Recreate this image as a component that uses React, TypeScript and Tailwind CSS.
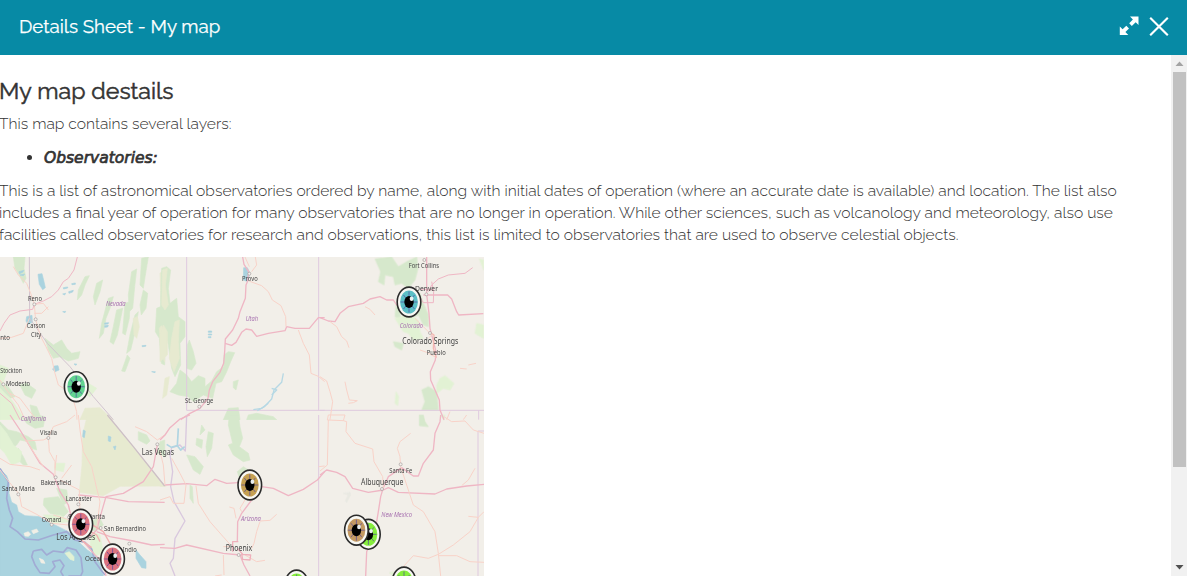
type Line = { d: string; c?: string; w?: number };
type Area = { d: string; c: string };
type Label = { x: number; y: number; w: number; s: number; t: string; region?: boolean };
type Tile = { x: number; y: number; areas: Area[]; lines: Line[]; labels: Label[]; towns?: [number, number][] };

const PINK = "#efb6c4";
const PEACH = "#f8d2c8";
const BORDER = "#dfc9df";
const GREEN = "#d6e8cc";
const LIME = "#e2f2d4";
const OLIVE = "#e7ead0";
const WATER = "#aad3df";

const tiles: Tile[] = [
  {
    x: 0,
    y: 255,
    areas: [
      { c: GREEN, d: "M40 6L75 6L72 40L78 70L70 85L55 55L45 40Z M255 65L268 62L255 90L245 120L232 135L235 105Z M290 85L308 75L300 110L285 150L280 125Z M325 130L340 125L330 160L318 190L310 235L298 250L305 205Z M350 165L368 160L360 200L352 240L340 268L330 260L340 215Z M375 145L390 140L388 190L376 240L368 235Z M395 50L410 42L404 95L398 160L388 170L385 120Z M425 10L445 6L436 60L430 100L420 90Z M430 105L443 115L438 160L424 180L420 150Z M405 180L415 170L405 230L392 285L380 295L390 240Z M470 160L494 150L494 330L484 325L478 250L466 230Z M382 300L390 310L375 350L365 348Z M135 250L160 270L185 255L200 280L215 295L240 290L235 310L205 318L180 305L160 310L145 285Z M60 390L80 385L108 405L95 430L75 420Z M0 375L25 395L45 425L30 430L0 405Z M90 450L110 455L125 494L100 494Z" },
      { c: LIME, d: "M0 400L35 435L75 494L0 494Z M240 370L290 400L270 425L235 405Z M0 330L25 340L10 380L0 375Z" },
      { c: OLIVE, d: "M400 190L412 185L418 215L410 250L402 240Z M480 55L494 40L494 130L483 140Z M478 220L494 200L494 320L484 300Z M255 460L300 458L338 494L240 494Z" },
      { c: WATER, d: "M114 58L126 56L132 80L136 98L128 104L118 88Z M80 185L96 181L97 202L84 208L78 198Z M163 333L174 332L177 345L165 350L158 343Z M190 98L203 96L203 99L191 102Z M206 110L220 106L218 111L207 115Z M215 86L226 84L226 88L216 89Z M188 117L197 115L194 120Z M57 50L72 46L68 52L58 56Z M60 60L74 57L70 62Z M314 204L326 203L324 207L314 208Z M314 212L325 211L323 216L314 217Z M426 272L438 271L437 274L427 275Z M188 170L197 169L195 173Z M222 327L230 327L228 331Z M455 350L466 350L465 353Z" },
    ],
    lines: [
      { d: "M88 6L89 190L142 265L210 335L280 425L340 494", c: "#d2c4cf" },
      { d: "M232 6L222 45L205 70L190 80L175 105L155 125L130 138L103 148L98 163L60 168L30 180L12 205L0 228", c: PINK },
      { d: "M40 35L55 60L80 85L92 115L103 148L106 185L112 215L125 250L138 275L155 310L165 355L175 390L198 405L220 435L230 470L231 494", c: PEACH },
      { d: "M103 148L130 145L145 165 M103 175L125 175L145 155 M0 250L35 247L70 235L88 190 M0 375L20 405L55 450L75 494 M30 415L60 430L90 470L110 494", c: PEACH },
      { d: "M0 415L35 445L60 494", c: PINK },
    ],
    towns: [[103, 148], [107, 193], [10, 388]],
    labels: [
      { x: 84, y: 137, w: 42, s: 20, t: "Reno" },
      { x: 80, y: 218, w: 56, s: 22, t: "Carson" },
      { x: 93, y: 245, w: 31, s: 22, t: "City" },
      { x: 1, y: 254, w: 29, s: 24, t: "nto" },
      { x: 1, y: 354, w: 65, s: 20, t: "Stockton" },
      { x: 18, y: 394, w: 72, s: 20, t: "Modesto" },
      { x: 318, y: 154, w: 59, s: 21, t: "Nevada", region: true },
    ],
  },
  {
    x: 160,
    y: 255,
    areas: [
      { c: GREEN, d: "M5 40L20 35L32 45L25 100L30 145L50 130L55 185L75 200L75 245L60 265L62 330L45 365L35 340L25 270L10 220L0 200Z M88 255L100 290L108 325L95 345L80 340L82 270Z M60 345L80 360L95 380L115 362L135 370L135 395L155 378L170 350L190 335L192 300L205 290L224 293L212 320L200 350L185 380L168 385L158 430L130 420L100 440L85 425L55 420L30 410L50 385Z M220 380L235 375L228 405L220 398Z M265 480L290 475L340 485L350 494L260 494Z M205 460L235 458L240 494L190 494Z" },
      { c: OLIVE, d: "M8 45L22 40L16 90L25 150L15 165L5 150Z M45 200L58 195L55 260L58 310L42 350L28 310L35 250Z M10 210L22 230L22 300L0 320L0 240Z M15 370L28 365L20 420L8 430Z" },
      { c: WATER, d: "M251 38L262 38L270 55L263 80L250 75Z M145 228L155 228L155 232L145 232Z M145 237L155 237L155 240L145 240Z M145 245L153 245L153 248L145 248Z" },
    ],
    lines: [
      { d: "M80 6L80 466L494 466 M476 6L476 466", c: BORDER },
      { d: "M248 6L252 28L266 50L263 78L258 90L256 130L240 170L235 190L218 225L196 252L194 290L191 325L180 352L158 380L148 405L144 430L120 460L90 475L62 494", c: PINK, w: 4 },
      { d: "M195 265L215 271L228 262L245 232L258 222L275 225L290 244L325 235L375 227L380 215L405 220L448 220L475 188L494 188", c: PINK, w: 4 },
      { d: "M266 78L305 92L325 110L337 135L363 152L377 185L378 215 M415 225L430 265L448 300L453 355L475 364L494 380 M275 50L290 30L286 6 M255 6L268 35", c: PEACH },
      { d: "M370 355L365 382L342 405L335 432L313 455L292 467", c: "#b6d8e4", w: 4 },
      { d: "M335 400L350 405L335 420 M280 464L305 460L325 445", c: "#b6d8e4", w: 4 },
    ],
    towns: [[268, 56], [118, 455]],
    labels: [
      { x: 246, y: 79, w: 47, s: 20, t: "Provo" },
      { x: 257, y: 198, w: 37, s: 20, t: "Utah", region: true },
      { x: 75, y: 444, w: 85, s: 21, t: "St. George" },
    ],
  },
  {
    x: 320,
    y: 255,
    areas: [
      { c: GREEN, d: "M165 12L215 6L235 35L260 20L290 6L294 40L285 75L265 100L245 85L225 90L220 65L195 60L192 90L175 80L182 50Z M283 105L300 115L310 145L325 180L325 215L310 210L295 180L285 185L275 165L293 160Z M228 150L242 170L240 190L225 185Z M305 405L325 395L350 410L355 465L305 465L315 440Z M220 260L250 265L245 285L225 275Z" },
      { c: LIME, d: "M225 190L270 178L295 195L300 230L310 250L280 255L265 235L250 230Z M360 370L375 362L402 385L390 405L370 400L350 415L350 390Z M228 410L236 425L233 452L225 445Z M470 205L491 210L491 250L465 235Z M478 12L491 15L491 45Z" },
    ],
    lines: [
      { d: "M0 466L494 466 M476 466L476 494", c: BORDER },
      { d: "M0 188L25 198L45 200L60 175L85 155L130 145L150 132L180 125L200 135L220 135L230 150L245 148 M310 120L383 120L395 132L410 170L416 180L490 176 M320 6L320 118L327 175L330 220L348 290L346 315L331 350L332 375L358 435L360 465L372 494", c: PINK, w: 4 },
      { d: "M458 38L435 55L385 60L355 72L335 90L325 110 M335 80L341 110L340 143L310 143L302 130 M300 102L340 105", c: PINK },
      { d: "M30 200L50 215L65 245L80 258L87 278 M135 155L150 163L165 180 M0 365L20 378L30 410L38 440L30 494 M75 380L80 405L88 435L112 437L100 443L85 445 M285 190L310 215L335 240L325 250 M420 340L440 342 M445 330L468 325 M300 285L320 292L350 308 M390 470L380 494 M430 494L440 480", c: PEACH },
      { d: "M330 232L342 240L340 280L349 308", c: "#f4b9b2", w: 4 },
    ],
    towns: [[313, 15], [319, 118], [330, 234]],
    labels: [
      { x: 266, y: 38, w: 91, s: 20, t: "Fort Collins" },
      { x: 285, y: 107, w: 69, s: 24, t: "Denver" },
      { x: 239, y: 218, w: 70, s: 20, t: "Colorado", region: true },
      { x: 247, y: 266, w: 168, s: 26, t: "Colorado Springs" },
      { x: 320, y: 299, w: 57, s: 20, t: "Pueblo" },
    ],
  },
  {
    x: 0,
    y: 415,
    areas: [
      { c: GREEN, d: "M0 20L25 45L50 50L85 65L105 80L110 105L95 100L85 80L60 75L50 90L30 105L15 85L0 80Z M70 10L105 0L135 5L130 35L105 40L80 25Z M55 100L70 125L82 150L70 150L50 130Z M170 220L200 225L205 260L190 270L180 245Z M132 250L175 245L205 290L190 305L150 295L130 270Z M260 320L300 310L310 330L285 350L265 335Z M415 50L440 60L450 78L440 88L415 75Z M480 80L494 75L494 125L475 115Z" },
      { c: LIME, d: "M0 30L20 55L40 90L65 110L60 140L35 150L15 115L0 100Z M165 145L195 145L190 170L165 165Z M130 300L180 300L210 320L160 325Z M275 350L300 360L310 410L285 425L270 400Z" },
      { c: OLIVE, d: "M262 0L322 0L400 95L494 213L360 214L310 242L238 232L246 150L248 60Z" },
      { c: WATER, d: "M0 165L8 170L20 182L28 205L27 235L35 262L50 270L55 290L75 302L120 305L145 320L165 330L205 350L220 360L240 385L262 405L290 425L302 450L310 483L0 483Z M408 405L420 420L438 440L438 460L425 458L408 430Z M340 95L348 93L345 105Z M250 45L256 48L253 68L248 65Z M325 63L333 66L331 80L325 78Z" },
      { c: "#f1efe6", d: "M72 355L85 350L92 358L85 364L75 363Z M95 347L110 342L115 350L100 356Z M118 430L130 435L135 445L124 444Z" },
      { c: LIME, d: "M195 415L208 410L222 425L222 437L210 433Z" },
    ],
    lines: [
      { d: "M322 0L400 95L494 213", c: "#cdbfc6", w: 4 },
      { d: "M0 160L25 200L20 250L28 285L38 310L30 335L52 350L75 372L115 375L160 360L200 350L225 375L255 382L275 402L285 440L303 465L315 480", c: "#a1abd4", w: 5 },
      { d: "M100 408L125 403L140 420L160 408L190 412L202 398L228 405L243 428L248 470L242 483L205 483 M100 408L95 425L105 450L120 473L148 475L165 455L158 440L180 435L192 452L182 470L190 483", c: "#a1abd4", w: 5 },
      { d: "M30 0L60 45L90 95L120 145L160 178L180 230L205 270L215 310L245 345L270 365L290 345L305 290L318 245L370 235L430 200L460 155L472 90", c: PINK, w: 4 },
      { d: "M235 240L320 248L385 260L494 262 M290 350L330 365L400 378L455 390L494 388 M250 380L285 420L310 445L318 483", c: PINK, w: 4 },
      { d: "M75 78L130 75L145 68L148 110L165 140L165 185 M60 60L80 78L100 110L130 155 M0 130L30 148L90 155L120 165 M0 165L25 198L58 238L65 275L110 298L155 325L205 330 M180 195L238 225L240 300 M185 190L215 150 M235 0L240 45L250 110L275 155L290 220L300 260L290 340 M405 35L440 50L472 75L494 60 M160 300L200 312L230 330 M225 0L200 20L160 35L145 68 M170 120L165 160", c: PEACH },
      { d: "M220 350L250 380L275 398 M265 345L290 360L300 380 M270 325L310 350L330 385", c: "#f1b0b0", w: 4 },
    ],
    towns: [[145, 69], [167, 187], [55, 238], [235, 268], [155, 329], [472, 88], [302, 339], [388, 386], [207, 307]],
    labels: [
      { x: 62, y: 17, w: 76, s: 20, t: "California", region: true },
      { x: 120, y: 59, w: 51, s: 20, t: "Visalia" },
      { x: 122, y: 211, w: 91, s: 21, t: "Bakersfield" },
      { x: 6, y: 228, w: 98, s: 21, t: "Santa Maria" },
      { x: 197, y: 259, w: 79, s: 21, t: "Lancaster" },
      { x: 125, y: 320, w: 59, s: 21, t: "Oxnard" },
      { x: 205, y: 312, w: 110, s: 20, t: "Santa Clarita" },
      { x: 169, y: 376, w: 117, s: 25, t: "Los Angeles" },
      { x: 312, y: 347, w: 126, s: 21, t: "San Bernardino" },
      { x: 368, y: 411, w: 42, s: 21, t: "Indio" },
      { x: 255, y: 439, w: 93, s: 21, t: "Oceanside" },
      { x: 425, y: 119, w: 97, s: 25, t: "Las Vegas" },
    ],
  },
  {
    x: 160,
    y: 415,
    areas: [
      { c: GREEN, d: "M208 0L235 0L240 35L248 70L238 95L265 115L270 135L250 140L220 120L205 90L218 85L205 30Z M125 30L135 45L120 60Z M145 50L160 55L155 100L142 125L138 95Z M110 70L128 75L125 100L108 90Z M80 120L105 125L130 155L120 178L100 165Z M232 170L250 155L265 165L240 195Z M90 210L97 215L100 265L90 250Z" },
      { c: OLIVE, d: "M0 195L18 214L0 214Z" },
    ],
    lines: [
      { d: "M476 0L476 483", c: BORDER },
      { d: "M80 0L76 108L60 90L35 98L30 120L38 170L32 215L42 260L75 318L45 370L40 430L30 445L45 483", c: "#d9c8de", w: 4 },
      { d: "M0 75L15 60L30 38L60 12L90 0 M15 210L80 206L140 212L165 193L200 205L235 203 M305 215L340 220L385 242L430 223L472 195L494 170 M275 255L245 295L233 320L232 380 M0 398L45 400L80 390L190 415L240 420L252 450L270 483", c: PINK, w: 4 },
      { d: "M0 110L10 150L15 210 M35 130L60 175L78 210L72 265L40 265L30 245 M0 255L30 245 M108 212L115 265L150 320L185 360L210 388 M300 320L290 350L282 385L275 400 M300 318L330 316L350 298 M208 276L222 280L228 310 M255 255L240 280L245 290 M190 420L192 480 M190 395L210 395 M255 420L290 440L315 436 M165 483L185 480 M476 155L494 153", c: PEACH },
      { d: "M55 40L52 92L62 105L74 95 M20 88L34 97L52 92", c: "#b0d5e2", w: 5 },
      { d: "M218 410L218 380L235 380 M245 418L272 420L270 435L248 433Z M232 400L250 420", c: "#efb0bb", w: 4 },
    ],
    towns: [[236, 420]],
    labels: [
      { x: 243, y: 319, w: 60, s: 20, t: "Arizona", region: true },
      { x: 197, y: 408, w: 80, s: 26, t: "Phoenix" },
    ],
  },
  {
    x: 320,
    y: 415,
    areas: [
      { c: GREEN, d: "M298 0L310 0L315 20L325 35L298 32Z" },
      { c: LIME, d: "M360 0L375 0L372 15Z M208 473L220 470L218 483Z" },
      { c: "#e9e9e2", d: "M70 235L90 232L92 240L80 262L76 258L85 240Z" },
    ],
    lines: [
      { d: "M492 48L474 48L474 483", c: BORDER },
      { d: "M0 180L20 165L50 172L75 185L98 220L145 232L190 225L205 218L235 232L345 237L380 222L440 213L492 208 M362 0L360 20L345 55L340 105L310 145L295 183L280 183L245 158L205 185L190 218L182 245L175 290L165 350L140 410L137 483", c: PINK, w: 4 },
      { d: "M22 15L70 17L80 20L78 50L105 85L158 102L162 140L188 185L190 220 M25 15L22 150L0 168 M22 15L25 0L75 0L70 17 M272 55L240 80L232 100L240 125L242 155L260 210L280 270L310 290L345 350L355 415L362 483 M372 5L395 20L435 18L460 45L492 55 M465 160L445 195L425 212 M492 290L475 307L445 304 M475 307L450 350L400 390L355 418L325 430L280 422L250 455 M355 422L410 422L450 440L492 442", c: PEACH },
    ],
    towns: [[242, 148], [186, 222]],
    labels: [
      { x: 208, y: 174, w: 69, s: 22, t: "Santa Fe" },
      { x: 123, y: 211, w: 127, s: 26, t: "Albuquerque" },
      { x: 184, y: 305, w: 92, s: 20, t: "New Mexico", region: true },
    ],
  },
];

const eyes: [number, number, string][] = [
  [409, 302, "#5cbfc6"],
  [76.2, 386.7, "#62d391"],
  [249.8, 485, "#c5a052"],
  [80.8, 524.3, "#dd7480"],
  [112.6, 559, "#dd7480"],
  [368.4, 534.3, "#86ee3c"],
  [356.4, 530.2, "#c49a63"],
  [404, 582, "#86ee3c"],
  [296.6, 585, "#86ee3c"],
];

function Eye({ x, y, color }: { x: number; y: number; color: string }) {
  return (
    <g transform={`translate(${x} ${y})`}>
      <ellipse rx="11.8" ry="14.9" fill="#f8f8f4" stroke="#2b2b2b" strokeWidth="1.6" />
      <ellipse rx="8.9" ry="11.5" fill={color} />
      <path d="M0-10.6V10.6M-8.3 0H8.3M-5.5-7L5.5 7M-5.5 7L5.5-7" stroke="#51459c" strokeWidth="0.9" opacity="0.75" />
      <ellipse rx="4.7" ry="6" fill="#000" />
      <ellipse cx="2.6" cy="-3.2" rx="1.9" ry="2.2" fill="#e9eef0" />
    </g>
  );
}

function MapPicture() {
  return (
    <svg className="mt-[11px] block h-[319px] w-[484px] shrink-0" viewBox="0 257 484 319">
      <rect y="257" width="484" height="319" fill="#f2efe9" />
      <g className="blur-[0.5px]">
        {tiles.map((tile, i) => (
          <g key={i} transform={`translate(${tile.x} ${tile.y}) scale(0.33333)`}>
            {tile.areas.map((a, j) => (
              <path key={j} d={a.d} fill={a.c} stroke={a.c} strokeWidth="2" strokeLinejoin="round" />
            ))}
          </g>
        ))}
        {tiles.map((tile, i) => (
          <g key={i} transform={`translate(${tile.x} ${tile.y}) scale(0.33333)`} fill="none" strokeLinejoin="round">
            {tile.lines.map((l, j) => (
              <path key={j} d={l.d} stroke={l.c} strokeWidth={l.w ?? 3} />
            ))}
            {tile.towns?.map(([x, y], j) => (
              <circle key={j} cx={x} cy={y} r="4.5" fill="#f5f2ee" stroke="#a39c9c" strokeWidth="2" />
            ))}
          </g>
        ))}
      </g>
      {tiles.map((tile, i) => (
        <g key={i} transform={`translate(${tile.x} ${tile.y}) scale(0.33333)`} className="font-['Noto_Sans',sans-serif]">
          {tile.labels.map((l) => (
            <text
              key={l.t}
              x={l.x}
              y={l.y}
              fontSize={l.s}
              textLength={l.w}
              lengthAdjust="spacingAndGlyphs"
              fill={l.region ? "#a873b0" : "#444444"}
              fontStyle={l.region ? "italic" : "normal"}
            >
              {l.t}
            </text>
          ))}
        </g>
      ))}
      {eyes.map(([x, y, c], i) => (
        <Eye key={i} x={x} y={y} color={c} />
      ))}
    </svg>
  );
}

function Header() {
  return (
    <header className="flex h-[55px] shrink-0 items-center justify-between bg-[#078aa5] pr-[18px] pl-[19px] text-white">
      <h1 className="pb-[3px] text-[18.72px] leading-[28px] font-normal [-webkit-text-stroke:0.25px_#fff]">
        Details Sheet - My map
      </h1>
      <div className="flex items-center gap-[10px] pb-[3px]">
        <svg className="size-5" viewBox="0 0 20 20" fill="#fff">
          <path d="M11 .5H19.5V9L16.7 6.3L12.8 10L10.2 7.3L13.9 3.4Z M9.3 19H.8V10.5L3.6 13.2L7.3 9.8L10 12.4L6.4 16.1Z" />
        </svg>
        <svg className="size-5" viewBox="0 0 20 20" fill="none" stroke="#fff" strokeWidth="2.1">
          <path d="M1.2 1.7L18.8 19.3M18.8 1.7L1.2 19.3" />
        </svg>
      </div>
    </header>
  );
}

function Scrollbar() {
  return (
    <div className="flex w-4 shrink-0 flex-col items-center bg-[#f1f1f1]">
      <svg className="h-[17px] w-4" viewBox="0 0 16 17">
        <path d="M4.5 11L8.5 6.5L12.5 11Z" fill="#a3a3a3" />
      </svg>
      <div className="ml-px h-[395px] w-[13px] bg-[#c1c1c1]" />
      <div className="flex-1" />
      <svg className="h-[17px] w-4" viewBox="0 0 16 17">
        <path d="M4.5 6L8.5 10.5L12.5 6Z" fill="#505050" />
      </svg>
    </div>
  );
}

export default function App() {
  return (
    <div className="flex h-[576px] w-[1187px] flex-col overflow-hidden bg-white font-['Raleway','Lato',sans-serif] text-[#333]">
      <Header />
      <div className="flex min-h-0 flex-1">
        <main className="flex min-w-0 flex-1 flex-col overflow-hidden">
          <h2 className="mt-[21px] -ml-px text-[23.2px] leading-[30px] font-normal [-webkit-text-stroke:0.5px_#333]">
            My map destails
          </h2>
          <p className="mt-[7px] -ml-px text-[15.6px] leading-[22px] font-light">This map contains several layers:</p>
          <ul className="mt-[12px] list-disc pl-[44px] text-[15.6px] leading-[22px]">
            <li className="h-[22px]">
              <strong className="font-['DejaVu_Sans',sans-serif] text-[15.5px] font-normal italic [-webkit-text-stroke:0.7px_#333]">
                Observatories:
              </strong>
            </li>
          </ul>
          <div className="mt-[11px] -ml-px text-[15.62px] leading-[22px] font-light whitespace-nowrap">
            <p>
              This is a list of astronomical observatories ordered by name, along with initial dates of operation (where an accurate date is available) and location. The list also
            </p>
            <p>
              includes a final year of operation for many observatories that are no longer in operation. While other sciences, such as volcanology and meteorology, also use
            </p>
            <p>
              facilities called observatories for research and observations, this list is limited to observatories that are used to observe celestial objects.
            </p>
          </div>
          <MapPicture />
        </main>
        <Scrollbar />
      </div>
    </div>
  );
}
